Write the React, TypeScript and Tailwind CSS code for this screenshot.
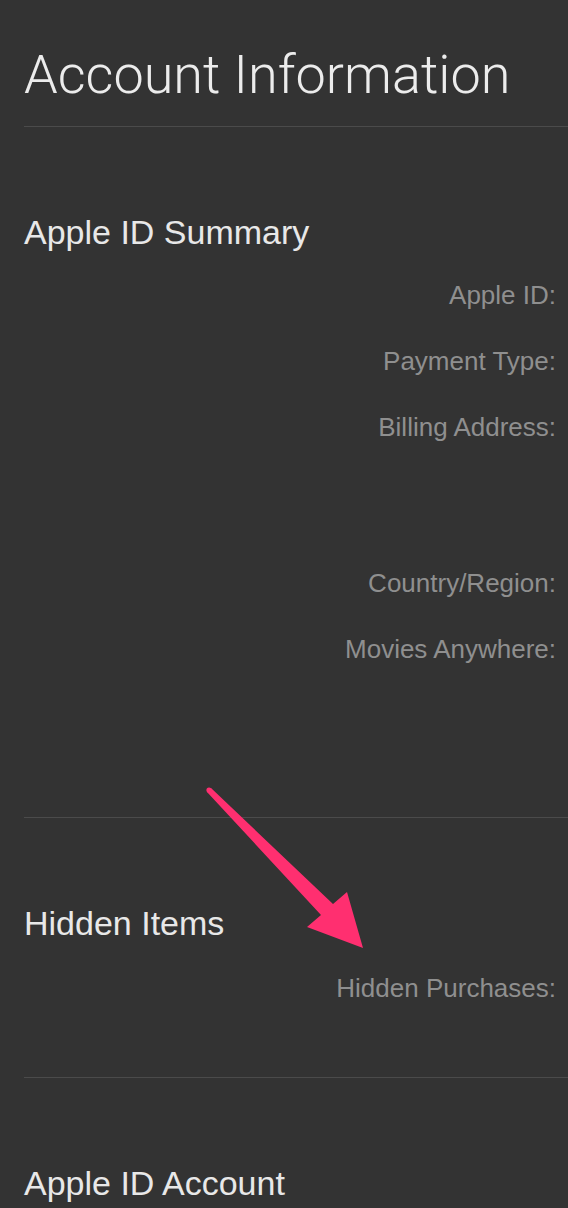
const summaryRows = [
  { label: "Apple ID:", gapBefore: 0 },
  { label: "Payment Type:", gapBefore: 0 },
  { label: "Billing Address:", gapBefore: 0 },
  { label: "Country/Region:", gapBefore: 90 },
  { label: "Movies Anywhere:", gapBefore: 0 },
];

function Divider() {
  return <div className="h-px bg-[#4b4b4b]" />;
}

function Heading({ children }: { children: string }) {
  return (
    <h2 className="mt-[85px] text-[34px] leading-[40px] text-[#e8e8e8] font-['Liberation_Sans',Arial,sans-serif]">
      {children}
    </h2>
  );
}

function Label({ children }: { children: string }) {
  return (
    <div className="h-[66px] pr-3 text-right text-[26px] leading-[66px] text-[#8f8f8f] font-['Liberation_Sans',Arial,sans-serif]">
      {children}
    </div>
  );
}

function Arrow() {
  return (
    <svg
      className="pointer-events-none absolute left-0 top-0"
      width="568"
      height="1208"
      viewBox="0 0 568 1208"
    >
      <polygon
        points="211,788 333,904 347,892 363,948 307,927 321,915 207,792"
        fill="#ff2f70"
      />
      <circle cx="209" cy="790" r="2.6" fill="#ff2f70" />
    </svg>
  );
}

export default function App() {
  return (
    <div className="relative h-[1208px] w-full overflow-hidden bg-[#333333] pl-6">
      <h1 className="pt-[47px] text-[54px] leading-[55px] font-light text-[#ececec] font-['Roboto','Liberation_Sans',sans-serif]">
        Account Information
      </h1>
      <div className="mt-6">
        <Divider />
      </div>

      <Heading>Apple ID Summary</Heading>
      <div className="mt-[10px] mb-[135px]">
        {summaryRows.map(row => (
          <div key={row.label} style={{ marginTop: row.gapBefore }}>
            <Label>{row.label}</Label>
          </div>
        ))}
      </div>
      <Divider />

      <Heading>Hidden Items</Heading>
      <div className="mt-[12px] mb-[56px]">
        <Label>Hidden Purchases:</Label>
      </div>
      <Divider />

      <Heading>Apple ID Account</Heading>

      <Arrow />
    </div>
  );
}
